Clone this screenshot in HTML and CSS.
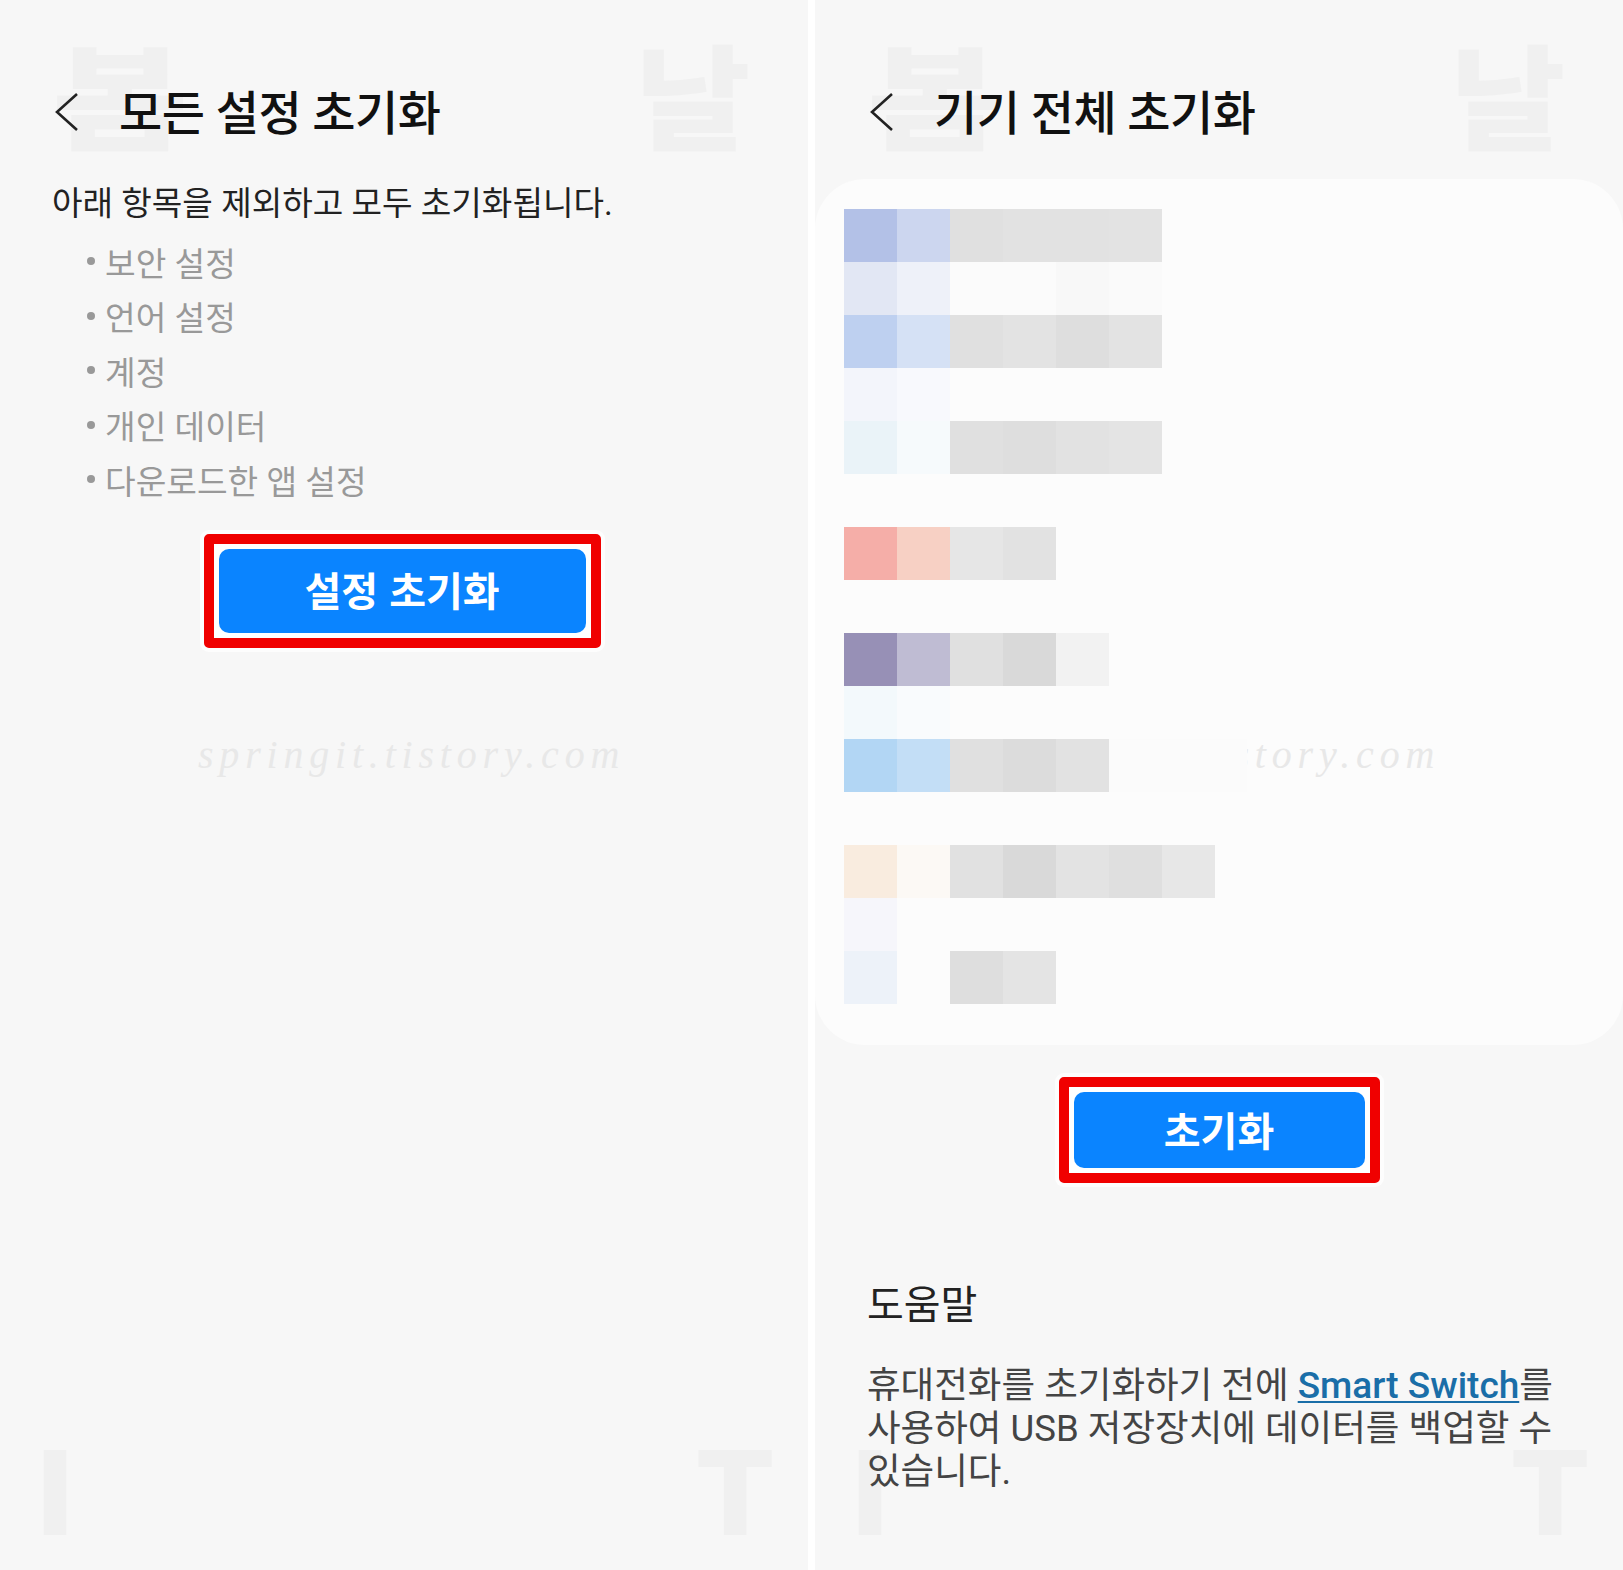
FILE: index.html
```html
<!DOCTYPE html>
<html lang="ko">
<head>
  <meta charset="UTF-8" />
  <title>초기화</title>
  <link rel="stylesheet" href="styles.css">
</head>
<body>

  <div class="screens">

    <!-- left phone -->
    <section class="panel">
      <span class="mark mark-a">봄</span>
      <span class="mark mark-b">날</span>
      <span class="mark mark-c">I</span>
      <span class="mark mark-d">T</span>
      <span class="stamp">springit.tistory.com</span>

      <header class="title-bar">
        <svg class="back" width="24" height="38" viewBox="0 0 24 38"><path d="M22 1 L2 19 L22 37" fill="none" stroke="#222" stroke-width="2.6"/></svg>
        <h1>모든 설정 초기화</h1>
      </header>

      <p class="lead">아래 항목을 제외하고 모두 초기화됩니다.</p>
      <ul class="keep-list">
        <li>보안 설정</li>
        <li>언어 설정</li>
        <li>계정</li>
        <li>개인 데이터</li>
        <li>다운로드한 앱 설정</li>
      </ul>

      <div class="action action-settings">
        <div class="highlight"><button class="reset-btn">설정 초기화</button></div>
      </div>
    </section>

    <!-- right phone -->
    <section class="panel">
      <span class="mark mark-a">봄</span>
      <span class="mark mark-b">날</span>
      <span class="mark mark-c">I</span>
      <span class="mark mark-d">T</span>
      <span class="stamp">springit.tistory.com</span>

      <header class="title-bar">
        <svg class="back" width="24" height="38" viewBox="0 0 24 38"><path d="M22 1 L2 19 L22 37" fill="none" stroke="#222" stroke-width="2.6"/></svg>
        <h1>기기 전체 초기화</h1>
      </header>

      <div class="account-card">
        <svg class="mosaic" width="440" height="795" viewBox="0 0 440 795" shape-rendering="crispEdges">
          <rect x="265" y="477" width="138" height="159" fill="#fcfcfc"/>
          <rect x="212" y="530" width="191" height="53" fill="#fbfbfb"/>

          <rect x="0" y="0" width="53" height="53" fill="#b3c1e7"/>
          <rect x="53" y="0" width="53" height="53" fill="#ccd6ef"/>
          <rect x="106" y="0" width="53" height="53" fill="#e0e0e0"/>
          <rect x="159" y="0" width="106" height="53" fill="#e2e2e2"/>
          <rect x="265" y="0" width="53" height="53" fill="#e3e3e3"/>

          <rect x="0" y="53" width="53" height="53" fill="#e2e7f4"/>
          <rect x="53" y="53" width="53" height="53" fill="#eef1f9"/>
          <rect x="106" y="53" width="106" height="53" fill="#fbfbfb"/>
          <rect x="212" y="53" width="53" height="53" fill="#f8f8f8"/>
          <rect x="265" y="53" width="53" height="53" fill="#fafafa"/>

          <rect x="0" y="106" width="53" height="53" fill="#bed0f0"/>
          <rect x="53" y="106" width="53" height="53" fill="#d5e1f5"/>
          <rect x="106" y="106" width="53" height="53" fill="#e0e0e0"/>
          <rect x="159" y="106" width="53" height="53" fill="#e3e3e3"/>
          <rect x="212" y="106" width="53" height="53" fill="#dedede"/>
          <rect x="265" y="106" width="53" height="53" fill="#e3e3e3"/>

          <rect x="0" y="159" width="53" height="53" fill="#f3f5fb"/>
          <rect x="53" y="159" width="53" height="53" fill="#f8f9fd"/>

          <rect x="0" y="212" width="53" height="53" fill="#eaf3f8"/>
          <rect x="53" y="212" width="53" height="53" fill="#f6fafc"/>
          <rect x="106" y="212" width="53" height="53" fill="#e0e0e0"/>
          <rect x="159" y="212" width="53" height="53" fill="#dedede"/>
          <rect x="212" y="212" width="53" height="53" fill="#e2e2e2"/>
          <rect x="265" y="212" width="53" height="53" fill="#e4e4e4"/>

          <rect x="0" y="318" width="53" height="53" fill="#f5aea8"/>
          <rect x="53" y="318" width="53" height="53" fill="#f7d0c4"/>
          <rect x="106" y="318" width="53" height="53" fill="#e6e6e6"/>
          <rect x="159" y="318" width="53" height="53" fill="#e2e2e2"/>

          <rect x="0" y="424" width="53" height="53" fill="#9790b6"/>
          <rect x="53" y="424" width="53" height="53" fill="#bfbcd3"/>
          <rect x="106" y="424" width="53" height="53" fill="#e0e0e0"/>
          <rect x="159" y="424" width="53" height="53" fill="#d9d9d9"/>
          <rect x="212" y="424" width="53" height="53" fill="#f2f2f2"/>

          <rect x="0" y="477" width="53" height="53" fill="#f3f9fc"/>
          <rect x="53" y="477" width="53" height="53" fill="#f9fbfd"/>

          <rect x="0" y="530" width="53" height="53" fill="#b2d6f4"/>
          <rect x="53" y="530" width="53" height="53" fill="#c3def6"/>
          <rect x="106" y="530" width="53" height="53" fill="#e0e0e0"/>
          <rect x="159" y="530" width="53" height="53" fill="#dcdcdc"/>
          <rect x="212" y="530" width="53" height="53" fill="#e2e2e2"/>

          <rect x="0" y="636" width="53" height="53" fill="#f9ecdf"/>
          <rect x="53" y="636" width="53" height="53" fill="#fcf9f5"/>
          <rect x="106" y="636" width="53" height="53" fill="#e1e1e1"/>
          <rect x="159" y="636" width="53" height="53" fill="#d9d9d9"/>
          <rect x="212" y="636" width="53" height="53" fill="#e3e3e3"/>
          <rect x="265" y="636" width="53" height="53" fill="#dfdfdf"/>
          <rect x="318" y="636" width="53" height="53" fill="#e7e7e7"/>

          <rect x="0" y="689" width="53" height="53" fill="#f6f6fb"/>

          <rect x="0" y="742" width="53" height="53" fill="#edf2f9"/>
          <rect x="106" y="742" width="53" height="53" fill="#dedede"/>
          <rect x="159" y="742" width="53" height="53" fill="#e4e4e4"/>
        </svg>
      </div>

      <div class="action action-device">
        <div class="highlight"><button class="reset-btn">초기화</button></div>
      </div>

      <div class="help">
        <h2>도움말</h2>
        <p>휴대전화를 초기화하기 전에 <a href="#">Smart Switch</a>를 사용하여 USB 저장장치에 데이터를 백업할 수 있습니다.</p>
      </div>
    </section>

  </div>

</body>
</html>
```

FILE: styles.css
```css
* {
  box-sizing: border-box;
}

html, body {
  margin: 0;
  padding: 0;
}

body {
  background: #fff;
  font-family: Roboto, 'Noto Sans CJK KR', sans-serif;
}

.screens {
  display: flex;
  gap: 7px;
  height: 1570px;
  overflow: hidden;
}

.panel {
  position: relative;
  flex: 0 0 808px;
  height: 1570px;
  background: #f7f7f7;
  overflow: hidden;
}

/* big faint letters behind the screen */
.mark {
  position: absolute;
  color: #f0f0f0;
  font-size: 114px;
  font-weight: 900;
  line-height: 1.5;
  font-family: 'Noto Sans CJK KR', sans-serif;
  transform: scaleX(1.1);
  transform-origin: left center;
}

.mark-a { left: 52px; top: 6px; transform: scaleX(1.3); }
.mark-b { left: 635px; top: 6px; }
.mark-c { left: 33px; top: 1400px; }
.mark-d { left: 695px; top: 1400px; }

.stamp {
  position: absolute;
  z-index: 1;
  left: 198px;
  top: 731px;
  color: #e8e8e8;
  font-family: 'Liberation Serif', serif;
  font-style: italic;
  font-size: 40px;
  letter-spacing: 5.8px;
  line-height: 1.2;
}

.title-bar {
  position: relative;
  display: flex;
  align-items: center;
  gap: 40px;
  height: 46px;
  margin: 89px 0 0 55px;
}

.title-bar h1 {
  margin: 0;
  padding-top: 3px;
  color: #111;
  font-size: 47px;
  font-weight: 500;
  letter-spacing: -0.5px;
  line-height: 46px;
}

.lead {
  position: relative;
  margin: 46px 0 0 52px;
  color: #222;
  font-size: 33.2px;
  line-height: 46px;
}

.keep-list {
  position: relative;
  list-style: none;
  margin: 7px 0 0;
  padding: 0 0 0 87px;
}

.keep-list li {
  display: flex;
  align-items: center;
  gap: 10px;
  height: 54.5px;
  color: #999;
  font-size: 33.3px;
}

.keep-list li::before {
  content: '';
  width: 8px;
  height: 8px;
  border-radius: 50%;
  background: #999;
}

.action {
  position: relative;
  display: flex;
  justify-content: center;
}

.action-settings {
  margin-top: 27px;
  padding-right: 4px;
}

.action-device {
  margin-top: 32px;
}

.highlight {
  padding: 5px;
  background: #fff;
  border: 10px solid #f00000;
  border-radius: 5px;
  box-shadow: 0 0 0 4px #fdfdfd;
}

.action-settings .highlight {
  width: 397px;
  height: 114px;
}

.action-device .highlight {
  width: 321px;
  height: 106px;
}

.reset-btn {
  display: block;
  width: 100%;
  height: 100%;
  padding: 0 0 3px;
  border: none;
  border-radius: 10px;
  background: #0a84ff;
  color: #fff;
  font-family: 'Noto Sans CJK KR', sans-serif;
  font-size: 40px;
  font-weight: 700;
}

.account-card {
  position: relative;
  margin-top: 44px;
  height: 866px;
  padding: 30px 0 0 29px;
  background: #fcfcfc;
  border-radius: 50px;
}

.mosaic {
  position: relative;
  display: block;
  z-index: 2;
}

.help {
  position: relative;
  margin: 98px 44px 0 52px;
}

.help h2 {
  margin: 0;
  color: #222;
  font-size: 40px;
  font-weight: 400;
  line-height: 50px;
}

.help p {
  margin: 33px 0 0;
  color: #444;
  font-size: 36.55px;
  line-height: 43px;
  word-break: keep-all;
}

.help a {
  color: #1a6ea8;
  font-size: 37px;
  font-weight: 500;
  text-decoration-thickness: 2px;
  text-underline-offset: 3px;
}
```
